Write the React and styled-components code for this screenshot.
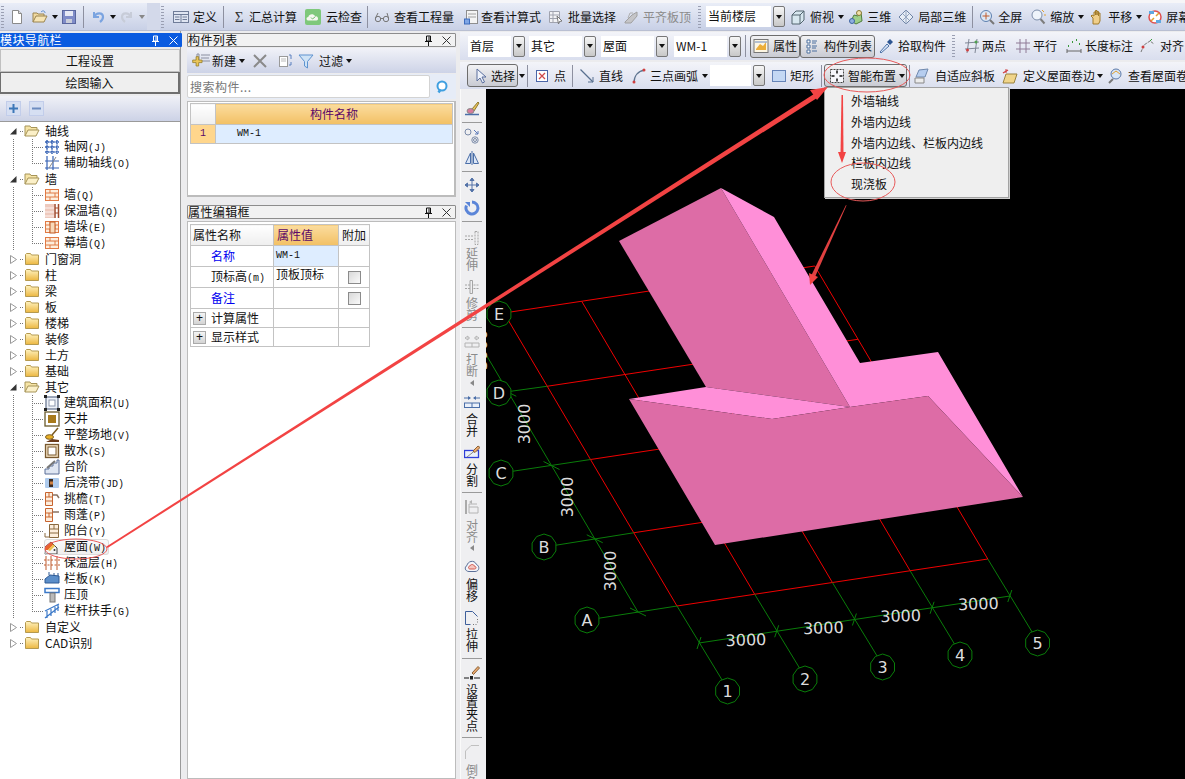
import React from "react";
import styled, { createGlobalStyle } from "styled-components";

const Global = createGlobalStyle`
  html, body { margin: 0; padding: 0; background: #ececee; }
  * { box-sizing: border-box; }
`;
const CJK = `"Noto Sans CJK SC", "Liberation Sans", sans-serif`;

const Page = styled.div`
  position: relative; width: 1185px; height: 779px; overflow: hidden;
  background: #ececee; font: 12px/1 ${CJK}; color: #111;
`;
const Bar = styled.div`
  display: flex; align-items: center; overflow: hidden; flex: none;
  height: ${p => p.$h}px; white-space: nowrap;
  background: linear-gradient(${p => p.$top}, ${p => p.$bottom});
`;
const TopBar = styled(Bar)`
  border-top: 3px solid #f6f6f8; border-bottom: 1px solid #b9bfd2;
`;
const Grip = styled.span`
  flex: none; width: 3px; height: 22px; margin-left: ${p => p.$ml}px;
  background: repeating-linear-gradient(to bottom, #9a9fb2 0 1px, transparent 1px 3px);
`;
const Sep = styled.span`
  flex: none; width: 1px; height: 22px; margin-left: ${p => p.$ml}px; background: #8d90a0;
`;
const GapBlock = styled.span`
  flex: none; width: 13px; height: 27px; margin-left: 1px; background: #d3d9ea;
`;
const Tool = styled.span`
  flex: none; display: flex; align-items: center; margin-left: ${p => p.$ml || 0}px;
  gap: ${p => p.$gap ?? 4}px; color: ${p => (p.$off ? "#8b8b8b" : "#111")};
`;
const Drop = styled.span`
  flex: none; width: 0; height: 0; margin: 0 1px 0 ${p => p.$ml || 0}px;
  border-left: 3px solid transparent; border-right: 3px solid transparent;
  border-top: 4px solid ${p => (p.$off ? "#888" : "#111")};
`;
const SigmaGlyph = styled.span`
  width: 16px; text-align: center; font: 15px/16px "Liberation Serif", serif; color: #333;
`;
const Select = styled.span`
  flex: none; display: flex; gap: 2px; height: 21px; width: ${p => p.$w}px;
  margin-left: ${p => p.$ml}px;
`;
const SelectText = styled.span`
  flex: 1; background: #fff; padding-left: 2px; line-height: 20px; font-size: 12px;
`;
const SelectBtn = styled.span`
  flex: none; width: 12px; display: flex; align-items: center; justify-content: center;
  border: 1px solid #777; border-radius: 2px; background: linear-gradient(#f6f6f6, #c8c8c8);
`;
const Toggle = styled.span`
  flex: none; display: flex; align-items: center; height: ${p => p.$h || 23}px;
  width: ${p => p.$w}px; margin-left: ${p => p.$ml || 0}px; padding-left: ${p => p.$pl}px;
  gap: ${p => p.$gap}px; border: 1px solid #6d6d6d; border-radius: 3px;
  background: linear-gradient(#f2f2f4, #c9cbd3);
`;
const Main = styled.div`display: flex; height: 748px;`;
const NavCol = styled.div`
  flex: none; width: 181px; padding-top: 2px; display: flex; flex-direction: column;
  border-right: 1px solid #9a9a9a;
`;
const ListCol = styled.div`
  flex: none; width: 269px; margin-left: 6px; padding-top: 2px;
  display: flex; flex-direction: column;
`;
const Title = styled.div`
  flex: none; height: 14px; display: flex; align-items: center;
  font-size: 12px; letter-spacing: .4px; line-height: 14px;
  margin-top: ${p => p.$mt || 0}px; margin-right: ${p => (p.$active ? -2 : 0)}px;
  color: ${p => (p.$active ? "#fff" : "#111")};
  background: ${p => (p.$active ? "#0a5be0" : "#f2f2f2")};
  border: ${p => (p.$active ? "0" : "1px solid #8d8d8d")};
  border-radius: 1px;
`;
const TitleText = styled.span`flex: 1;`;
const TitleBtn = styled.span`
  flex: none; width: 18px; display: flex; justify-content: center; align-items: center;
`;
const NavBtn = styled.div`
  flex: none; height: ${p => p.$h}px; margin-top: ${p => p.$mt}px; text-align: center;
  line-height: ${p => p.$h - 2}px; font-size: 12px; background: #efefef;
  border: 1px solid ${p => (p.$on ? "#6f6f6f" : "#c0c0c0")};
  border-width: ${p => (p.$on ? "1px 2px 2px 1px" : "1px")};
`;
const TreeTools = styled.div`
  flex: none; height: 25px; margin-top: 2px; display: flex; align-items: center;
  gap: 8px; padding-left: 6px; background: linear-gradient(#f0f1f7, #ccd2e6);
`;
const SquareBtn = styled.span`
  width: 15px; height: 15px; background: #d6dff2; border: 1px solid #c2cdea;
  display: flex; align-items: center; justify-content: center;
`;
const Tree = styled.div`
  flex: 1; background: #fff; padding-top: 1px; border-top: 1px solid #9a9a9a; overflow: hidden;
`;
const HiddenDefs = styled.svg`position: absolute; width: 0; height: 0;`;
const Row = styled.div`display: flex; align-items: center; height: 16px; font-size: 12px;`;
const Expander = styled.span`
  flex: none; width: 20px; height: 16px; display: flex; justify-content: flex-end;
  align-items: center; padding-right: 3px;
`;
const FolderDots = styled.span`
  flex: none; width: 4px; height: 1px;
  background: repeating-linear-gradient(to right, #777 0 1px, transparent 1px 2px);
`;
const TreeGuide = styled.span`
  flex: none; width: 14px; height: 16px; margin-right: 18px;
  background: repeating-linear-gradient(to bottom, #777 0 1px, transparent 1px 2px) 13px 0 / 1px 100% no-repeat;
`;
const Branch = styled.span`
  flex: none; width: 12px; height: 16px; background-repeat: no-repeat;
  background-image:
    repeating-linear-gradient(to bottom, #777 0 1px, transparent 1px 2px),
    repeating-linear-gradient(to right, #777 0 1px, transparent 1px 2px);
  background-size: 1px ${p => (p.$last ? "8px" : "100%")}, 100% 1px;
  background-position: 0 0, 0 8px;
`;
const ChildLabel = styled.span`
  display: flex; align-items: center; gap: 4px; height: 16px; padding-right: 3px;
  ${p => p.$sel && `outline: 1px solid #dcdcdc; outline-offset: -1px; border-radius: 3px;
    background: linear-gradient(#fbfbfb, #eeeeee);`}
`;
const FolderLabel = styled.span`margin-left: 5px;`;
const Mono = styled.span`font: 10px/12px "Liberation Mono", monospace;`;
const PanelBar = styled.div`
  flex: none; height: 25px; margin-top: 1px; display: flex; align-items: center;
  padding-left: 4px; background: linear-gradient(#f1f2f8, #cdd3e7);
`;
const Search = styled.div`
  flex: none; display: flex; align-items: center; height: 25px; margin-top: 1px;
  background: #e6ecf7;
`;
const SearchInput = styled.div`
  width: 243px; height: 23px; background: #fff; border: 1px solid #d3d3d3; border-radius: 2px;
  color: #777; font-size: 12px; line-height: 21px; padding-left: 2px; letter-spacing: .5px;
`;
const SearchIcon = styled.span`flex: 1; display: flex; justify-content: center;`;
const ListBox = styled.div`
  flex: none; height: 96px; margin-top: 2px; padding: 1px 2px;
  background: #fff; border: 1px solid #bcbcbc; border-width: 1px 2px 2px 1px;
`;
const Grid = styled.table`
  border-collapse: collapse; table-layout: fixed; font-size: 12px;
  width: ${p => p.$w}px;
  td, th { border: 1px solid #c3c3c3; padding: 0; font-weight: 400; }
`;
const HeadCell = styled.th`
  height: 21px; color: #5c0a68; text-align: ${p => p.$left ? "left" : "center"};
  background: linear-gradient(#fbdc9e, #f2c064);
  ${p => p.$w && `width: ${p.$w}px;`}
  ${p => p.$left && "padding-left: 3px !important;"}
`;
const PlainHead = styled.th`
  height: 21px; width: ${p => p.$w}px; text-align: ${p => p.$left ? "left" : "center"};
  background: linear-gradient(#ffffff, #eeeeee);
  padding-left: ${p => p.$left ? 2 : 0}px !important;
`;
const NumCell = styled.td`
  height: 19px; width: 25px; text-align: center; background: #ffd68c; color: #5c0a68;
  font: 10px/12px "Liberation Mono", monospace;
`;
const WmCell = styled.td`
  background: #deedff; font: 10px/12px "Liberation Mono", monospace;
  padding-left: ${p => p.$pl}px !important;
`;
const AttrBox = styled.div`
  flex: 1; margin-top: 2px; padding: 2px; background: #fff; border: 1px solid #bcbcbc;
`;
const AttrName = styled.td`
  height: 21px; padding-left: 20px !important; color: ${p => (p.$blue ? "#0000f0" : "#111")};
`;
const AttrValue = styled.td`vertical-align: top; padding: 1px 0 0 2px !important;`;
const AttrGroup = styled.td`height: 19px;`;
const AttrGroupIn = styled.span`display: flex; align-items: center; gap: 5px; padding-left: 2px;`;
const PlusBox = styled.span`
  width: 13px; height: 13px; border: 1px solid #aaa; background: linear-gradient(#f4f4f4, #d4d4d4);
  font: 12px/11px "Liberation Sans", sans-serif; text-align: center;
`;
const CheckCell = styled.td`text-align: center; vertical-align: middle;`;
const Check = styled.span`
  display: inline-block; width: 13px; height: 13px; vertical-align: middle;
  border: 1px solid #8b8b8b; background: linear-gradient(135deg, #d9d9d9, #fafafa);
`;
const Work = styled.div`
  flex: none; width: 725px; margin-left: 4px; padding-top: 1px; display: flex; flex-direction: column;
`;
const Row2 = styled(Bar)`margin-bottom: 2px;`;
const Body = styled.div`display: flex; flex: 1; min-height: 0; margin-top: 0;`;
const VBar = styled.div`
  flex: none; width: 26px; height: 690px; overflow: hidden; background: #efeff1;
  display: flex; flex-direction: column; align-items: center;
  border-left: 1px solid #fafafa; padding-right: 3px;
`;
const VSep = styled.span`
  flex: none; width: 20px; height: 1px; background: #9a9a9a; margin-top: ${p => p.$mt}px;
`;
const VIcon = styled.span`flex: none; display: block; height: 16px; margin-top: ${p => p.$mt}px;`;
const VText = styled.span`
  flex: none; width: 12px; line-height: 12px; font-size: 12px; word-break: break-all;
  margin-top: ${p => p.$mt}px; color: ${p => (p.$off ? "#8b8b8b" : "#111")};
`;
const VDrop = styled.span`
  flex: none; width: 0; height: 0; margin-top: ${p => p.$mt}px; margin-right: 0;
  border-top: 3px solid transparent; border-bottom: 3px solid transparent;
  border-right: 4px solid #888;
`;
const CanvasSvg = styled.svg`flex: none; display: block; background: #000;`;
const Menu = styled.div`
  position: absolute; left: 824px; top: 87px; width: 185px; height: 111px; padding-top: 3px;
  background: #efefef; border: 1px solid #a2a2a2; box-shadow: 1px 1px 0 #cfcfcf;
`;
const MenuItem = styled.div`
  height: 20.75px; line-height: 20px; padding-left: 26px; font-size: 12px; color: #111;
`;
const Overlay = styled.svg`
  position: absolute; left: 0; top: 0; pointer-events: none;
`;
const IconSvg = styled.svg`display: block; flex: none;`;

const I = ({ children, w = 16, h = 16 }) => (
  <IconSvg width={w} height={h} viewBox={`0 0 ${w} ${h}`} fill="none">{children}</IconSvg>
);

const brick = (
  <>
    <rect x="1.500" y="2.500" width="13" height="11" fill="#fdeedd" stroke="#e07a45" />
    <path d="M1.500 6h13M1.500 10h13M6 2.500V6M11 6v4M6 10v3.500" stroke="#e07a45" />
  </>
);
const icons = {
  doc: <I><path d="M3.500 1.500h6l3 3v10h-9z" fill="#fff" stroke="#8a8a8a" /><path d="M9.500 1.500v3h3" fill="#ddd" stroke="#8a8a8a" /></I>,
  open: <I><path d="M1 13V4h4l1 1h6v2" fill="#f0d9a0" stroke="#9a8450" /><path d="M1 13l3-6h11l-3 6z" fill="#f6e4b4" stroke="#9a8450" /><path d="M9 3c2-2 4-1 4 1" stroke="#5b8ac9" /></I>,
  save: <I><rect x="1.500" y="1.500" width="13" height="13" fill="#7f8cc8" stroke="#5a679e" /><rect x="4" y="2" width="8" height="5" fill="#e6e9f5" /><rect x="5" y="10" width="6" height="4" fill="#c9cdd9" /></I>,
  undo: <I><path d="M4 3v5h5" stroke="#7ba4e0" strokeWidth="2" /><path d="M4.500 7.500C6 3.500 13 3 13 8c0 2-1 3.500-3 5" stroke="#7ba4e0" strokeWidth="2.200" /></I>,
  redo: <I><path d="M12 3v5H7" stroke="#c7ccd8" strokeWidth="2" /><path d="M11.500 7.500C10 3.500 3 3 3 8c0 2 1 3.500 3 5" stroke="#c7ccd8" strokeWidth="2.200" /></I>,
  define: <I><rect x=".5" y="2.500" width="15" height="11" fill="#dfe5f2" stroke="#6f7c98" /><path d="M.5 5.500h15M8 5.500v8M9.500 8h4.500M9.500 10.500h4.500M2 8h4.500M2 10.500h4.500" stroke="#6f7c98" /></I>,
  cloud: <I><rect width="16" height="16" rx="2" fill="#7ec87b" /><path d="M3 11.500c-2-.3-2-3.300.3-3.500C4 4.800 8.500 4.500 10 7c3-.5 4.300 4 1.500 4.500z" fill="#f4f7f0" /><path d="M6 8.500l1.500 1.500L10.500 7.500" stroke="#6dbb6b" /></I>,
  glasses: <I><circle cx="4" cy="10" r="2.700" stroke="#777" /><circle cx="12" cy="10" r="2.700" stroke="#777" /><path d="M1.500 9L4 4M14.500 9L13 4M6.700 9.500h2.600" stroke="#777" /></I>,
  calc: <I><rect x="2.500" y="1.500" width="11" height="13" fill="#f4f4f4" stroke="#8e8e8e" /><path d="M4 5h8M4 8h8" stroke="#a0a0a0" /><rect x=".5" y="10" width="5" height="5" fill="#7fa6e6" stroke="#3e6cbc" /></I>,
  batch: <I><path d="M1.500 2.500h10v11h-10zM1.500 6h10M1.500 9.500h10M5 2.500v11" stroke="#a0a3ae" fill="#f2f2f5" /><path d="M9 7l5 5-2.500.5L10.500 15z" fill="#fff" stroke="#777" /></I>,
  flush: <I><path d="M2 13l7-7 5-3v4l-6 7H2z" fill="#c5c5c8" stroke="#a0a0a0" /><path d="M5 9l2-5h3" stroke="#b0b0b0" /></I>,
  cube: <I><path d="M2 6l4-4h8v9l-4 4H2z" fill="#d7e7ef" stroke="#52646f" /><path d="M2 6h8v9M10 6l4-4" stroke="#52646f" /></I>,
  three: <I><path d="M3 12l3-6 4 1 3-4 1 9-6 3z" fill="#9fcf88" stroke="#4e7d3c" /><circle cx="11" cy="4" r="2.500" fill="#f1e1a8" stroke="#8a7a38" /><circle cx="4" cy="12" r="2.500" fill="#8fb0e0" stroke="#3d63a0" /></I>,
  partial: <I><path d="M8 1l7 7-7 7-7-7z" fill="#e7edf5" stroke="#6e84a5" /><path d="M4.500 4.500l7 7M11.500 4.500l-7 7M8 1v14" stroke="#93a4bf" /></I>,
  full: <I><circle cx="7" cy="7" r="5.500" fill="#dbe8f7" stroke="#5d7fae" /><path d="M7 3.500v7M3.500 7h7" stroke="#c05a2a" /><path d="M11 11l4 4" stroke="#777" strokeWidth="2" /></I>,
  zoom: <I><circle cx="7" cy="6" r="5" fill="#eef4fb" stroke="#7d8fab" /><path d="M10.500 10l4 4.500" stroke="#7d7d7d" strokeWidth="2" /><path d="M12 1l2 2M14 6h2" stroke="#e0a030" /></I>,
  pan: <I><path d="M4 15V9L2 7l1-1 2 1V3h1.500v3V1.500H8V6 2.500h1.500V7 4H11v8l-1.500 3z" fill="#f0cf8a" stroke="#a17b2b" /></I>,
  screen: <I><circle cx="8" cy="8" r="6" fill="#fff" stroke="#e05050" strokeWidth="1.500" /><path d="M2 2h5v3H2zM9 11h5v3H9z" fill="#5fa8e0" /><path d="M4 12l3-3M9 7l3-3" stroke="#e0a030" strokeWidth="1.500" /></I>,
  attr: <I><rect x="1" y="1.500" width="14" height="13" fill="#fdf6e3" stroke="#777" /><path d="M3 11l4-5 3 2 3-4v8H3z" fill="#ecae3a" /><path d="M2 4h12" stroke="#6a8ac0" /></I>,
  list: <I w={12}><path d="M1 2h3v3H1zM1 7h3v3H1zM1 12h3v3H1z" fill="#fff" stroke="#4b6f9e" /><path d="M6 3h5M6 5h4M6 8h5M6 10h4M6 13h5" stroke="#4b6f9e" /></I>,
  pick: <I><path d="M2 14l7-8 2 2-8 7z" fill="#d7e5f7" stroke="#5073a8" /><path d="M9 4l3-3 3 3-3 3z" fill="#2e5692" /></I>,
  twoPts: <I><path d="M5 1l-2 14M13 1l-2 14M1 5l14-1M1 11l14-1" stroke="#7f8696" /><circle cx="3.500" cy="12" r="1.500" fill="#d04040" /><circle cx="12" cy="4" r="1.500" fill="#50a050" /></I>,
  parallel: <I><path d="M5 1v14M11 1v14M1 5h14M1 11h14" stroke="#8f7b96" /></I>,
  dimLen: <I><path d="M1 11v4M15 11v4M1 13h14" stroke="#666" /><path d="M2 8h1M6 4h1M10 2h1M13 6h1" stroke="#3a9a3a" strokeWidth="2" /></I>,
  alignT: <I><path d="M1 14l3-7 6-4 4 3" stroke="#777" strokeDasharray="3 1" /><circle cx="3" cy="9" r="1.500" fill="#d04040" /><path d="M10 3l2-2" stroke="#3a9a3a" /></I>,
  cursor: <I><path d="M4 1v12l3-3 2.500 5 2-1L9 9h4z" fill="#eef2fb" stroke="#5a6f9e" /></I>,
  point: <I><rect x="2.500" y="2.500" width="11" height="11" fill="#fff" stroke="#4a65a8" /><path d="M5 5l6 6M11 5l-6 6" stroke="#d04a4a" strokeWidth="1.300" /></I>,
  line: <I><path d="M1.500 1.500L14 14" stroke="#58708f" strokeWidth="1.300" /><path d="M9 14h5V9" stroke="#58708f" /></I>,
  arc: <I><path d="M3 15C3 8 7 3 14 2" stroke="#5e7590" strokeWidth="1.300" /><circle cx="3" cy="14" r="1.500" fill="#d04040" /><circle cx="13" cy="2" r="1.500" fill="#d04040" /></I>,
  rect: <I><rect x="1.500" y="2.500" width="13" height="11" fill="#c4d8f4" stroke="#6684b8" /></I>,
  smart: <I><rect x="1.500" y="1.500" width="13" height="13" fill="#f6f6fb" stroke="#444" strokeDasharray="2 1" /><path d="M8 2.500v3M8 10.500v3M2.500 8h3M10.500 8h3" stroke="#111" strokeWidth="1.500" /></I>,
  adapt: <I><path d="M5 2l9-1-3 8H2z" fill="#b6cdef" stroke="#6f88ad" /><path d="M1 10h9v5H1z" fill="#ececec" stroke="#888" /></I>,
  curb: <I><path d="M4 6h11l-3 9H1z" fill="#f0d58a" stroke="#9a8240" /><path d="M1 5l5-3" stroke="#d04040" strokeWidth="1.400" /><path d="M4 1v4" stroke="#d04040" /></I>,
  viewCurb: <I><circle cx="8" cy="6" r="5" fill="#d9e7f7" stroke="#5a78a8" /><path d="M4 6l4-3 4 3" stroke="#e0a030" /><path d="M5 11l-4 4" stroke="#777" strokeWidth="2" /></I>,
  brush: <I><path d="M8 9l6-7 1 1-5 8z" fill="#e8c25a" stroke="#8f7a30" /><ellipse cx="6.500" cy="11" rx="3.500" ry="2.500" fill="#d87a9a" stroke="#888" /><path d="M1 14.500h14" stroke="#4a6ea8" strokeWidth="1.500" /></I>,
  copyO: <I><circle cx="4" cy="4" r="3" stroke="#7a8aa8" /><circle cx="11" cy="12" r="3.200" stroke="#7a8aa8" /><circle cx="11" cy="12" r="1.500" stroke="#7a8aa8" /><path d="M10 2l4 4M14 3v3h-3" stroke="#5a78b8" /></I>,
  mirror: <I><path d="M8 1v14" stroke="#4a6ea8" /><path d="M6.500 3v10.500H1.500zM9.500 3v10.500h5z" fill="#dbe6f6" stroke="#4a6ea8" /></I>,
  move: <I><path d="M8 1v14M1 8h14M8 1L6 3.500h4zM8 15l-2-2.500h4zM1 8l2.500-2v4zM15 8l-2.500-2v4z" stroke="#5473a8" fill="#5473a8" /></I>,
  rotate: <I><path d="M8 2a6 6 0 1 1-5.500 3.500" stroke="#5b85d8" strokeWidth="3" /><path d="M1 2h5v5z" fill="#5b85d8" /></I>,
  extend: <I><path d="M11 1.500h3v13h-3zM1 6h9M1 9.500h9" stroke="#a4a4a4" strokeDasharray="2 1" /></I>,
  trim: <I><path d="M6 1.500h2.500v13H6z" stroke="#a4a4a4" /><path d="M1 6h5M1 9.500h5M9.500 6H15M9.500 9.500H15" stroke="#a4a4a4" strokeDasharray="2 1" /></I>,
  breakT: <I><path d="M1 4l3-2v4zM15 4l-3-2v4zM4 4h2M10 4h2M1 9h14v4H1zM8 9v4" stroke="#b3b3b3" /></I>,
  merge: <I><path d="M0 5h6M16 5h-6" stroke="#4a6ea8" /><path d="M7 5L4 3v4zM9 5l3-2v4z" fill="#4a6ea8" /><rect x=".5" y="10" width="15" height="4.500" fill="#eaf0fa" stroke="#4a6ea8" /><path d="M8 10v4" stroke="#4a6ea8" /></I>,
  split: <I><rect x=".5" y="6.500" width="14" height="7" fill="#eaf0fa" stroke="#2f3fd8" strokeWidth="1.300" /><path d="M3 13l10-8" stroke="#888" /><path d="M9 7l5-5 2 1.500-5 5z" fill="#eca970" stroke="#8a6236" /></I>,
  alignV: <I><path d="M2 1v14" stroke="#aaa" strokeWidth="2" /><path d="M5 8V5h8M5 8h9v6H5z" stroke="#b4b4b4" /><path d="M5 3l3-2v4z" fill="#b4b4b4" /></I>,
  offset: <I><path d="M5 12.500C1 12.500 0 8 3 6.500 3.500 2.500 10 0 12.500 5.500 16 7 15.500 12.500 11 12.500z" fill="#f4f5fa" stroke="#5a6f98" /><path d="M6 10c-2 0-2-3 0-3 .5-2 4-2 4.500.3 2 0 2 2.700 0 2.700z" fill="#f5c6c0" stroke="#d05a50" /></I>,
  stretch: <I><path d="M1.500 14.500v-13h7l5 5" stroke="#3e5f9a" /><path d="M1.500 14.500h5" stroke="#3e5f9a" /><path d="M9 14.500h5M13.500 9v4" stroke="#777" strokeDasharray="1 1.500" /></I>,
  gripI: <I><path d="M0 13h5M10 13h6" stroke="#111" /><rect x="6" y="11" width="3" height="3.500" fill="#222" /><path d="M8 8l6-6.500 1.500 1.500L9.500 9.500z" fill="#eca970" stroke="#8a6236" /></I>,
  chamfer: <I><path d="M1.500 15V7L7 1.500h8" stroke="#c0c0c0" /></I>,
  folderO: <I><path d="M1 13V3h5l1 1.500h6V7" fill="#f6e4a6" stroke="#a69458" /><path d="M1 13l3-6h11l-3 6z" fill="#fbf0c8" stroke="#a69458" /></I>,
  folder: <I><path d="M1.500 13.500v-10l1-1h4l1 1.500h7v9.500z" fill="url(#fg)" stroke="#b59a50" /></I>,
  grid: <I><path d="M3 1v14M8 1v14M13 1v14M1 3h14M1 8h14M1 13h14" stroke="#3561b4" strokeWidth="1.500" strokeDasharray="2 .6" /></I>,
  aux: <I><path d="M3 1v14M9 1v14M1 13h14M1 6h14" stroke="#3561b4" strokeWidth="1.200" /><path d="M5 13L12 2" stroke="#888" /></I>,
  brick: <I>{brick}</I>,
  insul: <I><rect x="1" y="1" width="9" height="14" fill="#eec9bd" /><path d="M1 5h9M1 9h9M1 13h9" stroke="#f7e4de" strokeWidth="1.500" /><path d="M11 1v14M14.500 1v14" stroke="#a14a2c" strokeWidth="1.500" /><path d="M11 5h3M11 10h3" stroke="#a14a2c" /></I>,
  pier: <I>{brick}<rect x="6" y="3" width="5" height="11" fill="#f8d9b8" stroke="#c05a25" /></I>,
  area: <I><rect x="2" y="2" width="12" height="12" fill="#eef2f8" stroke="#6d7a94" strokeWidth="1.300" /><rect x="5" y="5" width="6" height="6" fill="#fff" stroke="#8d97ad" /><path d="M0 0h3v3H0zM13 0h3v3h-3zM0 13h3v3H0zM13 13h3v3h-3z" fill="#222" /></I>,
  well: <I><rect x="1" y="1" width="14" height="14" fill="#fff" stroke="#6a5a2a" strokeWidth="1.300" /><rect x="4" y="4" width="8" height="8" fill="#a87a1c" /></I>,
  level: <I><path d="M8 8l6-7" stroke="#7a5a20" strokeWidth="1.500" /><ellipse cx="5.500" cy="10" rx="4" ry="2.300" fill="#e8b028" stroke="#7a5a20" /><path d="M2 15l6-3 7 1v2z" fill="#6a3a1a" /></I>,
  apron: <I><rect x="1.500" y="1.500" width="13" height="13" fill="#f2e0c0" stroke="#7a5a30" strokeWidth="1.300" /><rect x="4" y="4" width="8" height="8" fill="#fff" stroke="#7a5a30" /></I>,
  step: <I><path d="M1 15V10h4V7h4V4h4V1h2v14z" fill="#dfe6f2" stroke="#5a6f98" /><path d="M3 9l8-7" stroke="#777" strokeWidth="2" /></I>,
  post: <I><rect x="1" y="3" width="14" height="10" rx="1" fill="#aecbed" /><path d="M5 4h4v8H5z" fill="#3a2a20" /><path d="M6 8h3" stroke="#d08040" strokeWidth="3" /></I>,
  eave: <I><path d="M1.500 1.500h7v13h-7zM1.500 6h7M1.500 10h7M5 1.500V6" stroke="#c8642f" fill="#fdeedd" /><path d="M8.500 4H13l2 3" stroke="#8a7260" strokeWidth="1.500" /></I>,
  canopy: <I><path d="M1.500 1.500h7v13h-7zM1.500 6h7M1.500 10h7M5 6v4" stroke="#c8642f" fill="#fdeedd" /><path d="M8.500 5H15" stroke="#8a7260" strokeWidth="1.500" /></I>,
  balcony: <I><path d="M5.500 1.500h9v13h-9zM5.500 6h9M5.500 10h9M10 1.500V6" stroke="#8a6a40" fill="#fdeedd" /><path d="M1 10v4h5" stroke="#8a6a40" /></I>,
  roof: <I><path d="M1 15V8l6-5 6 6v6z" fill="#f5f5f5" stroke="#444" /><path d="M1 8l6-5 2.500 2.500L4 11H1z" fill="#e8662a" /><path d="M4 11l5.500-5.500L11 7l-5 5z" fill="#eec24a" /><circle cx="10.500" cy="11" r="1" fill="#333" /></I>,
  insLayer: <I><path d="M2 1v14M7 1v14M13 1v14" stroke="#bf5a2c" /><path d="M0 5h16M0 10h16" stroke="#bf5a2c" strokeDasharray="2 1.500" /></I>,
  parapet: <I><path d="M1 8l5-4 9 1v7H1z" fill="#5b8ec9" stroke="#2f5a94" /><path d="M5 4V1M10 5V2M14 5V2" stroke="#2f5a94" /></I>,
  coping: <I><rect x="1" y="1.500" width="14" height="4" fill="#fff" stroke="#3a78c8" strokeWidth="1.500" /><rect x="6" y="6" width="5" height="9" fill="#b9b9b9" stroke="#777" /></I>,
  rail: <I><path d="M1 15l14-11M1 8l14-7M3 8v7M7 6v7M11 4v6M14 2v6" stroke="#3a78c8" strokeWidth="1.200" /></I>,
  magnify: <I><circle cx="7" cy="7" r="4.500" fill="#fff" stroke="#3f9fe0" strokeWidth="2" /><path d="M3.500 13.500l2-3" stroke="#3f9fe0" strokeWidth="2.500" /></I>,
  addNew: <I w={20}><path d="M6 1h2v7H6zM10 2h9M10 5h8M10 8h9" stroke="#8a8fa0" /><path d="M2 13h4v-4h3v4h4v3H9v4H6v-4H2z" transform="translate(0 -4) scale(.85)" fill="#ecc658" stroke="#9a8230" /></I>,
  del: <I><path d="M2 2l12 12M14 2L2 14" stroke="#8a8a8a" strokeWidth="2" /></I>,
  copyDoc: <I><rect x="2.500" y="3.500" width="8" height="10" fill="#fff" stroke="#9a9a9a" /><path d="M4 6h5M4 8h5" stroke="#bbb" /><path d="M12 2h2v4M14 9v3h-2" stroke="#5a80c0" /></I>,
  filter: <I><path d="M1 2h14L9.500 8.500V15L6.500 13V8.500z" fill="#cfe3f6" stroke="#5e93cf" /></I>,
};

const PinBtn = ({ c }) => (
  <TitleBtn>
    <I w={9} h={11}>
      <path d="M2.500 1h4v5h-4zM1 6.500h7M4.500 7v4" stroke={c} />
      <path d="M5 1.500v4" stroke={c} />
    </I>
  </TitleBtn>
);
const CloseBtn = ({ c }) => (
  <TitleBtn>
    <I w={9} h={9}><path d="M.5.5l8 8M8.500.5l-8 8" stroke={c} /></I>
  </TitleBtn>
);

const Arrow = () => <Drop />;

const render = (x, i) => {
  if (x.t === "grip") return <Grip key={i} $ml={x.ml} />;
  if (x.t === "sep") return <Sep key={i} $ml={x.ml} />;
  if (x.t === "drop") return <Drop key={i} $ml={x.ml} $off={x.off} />;
  if (x.t === "gap") return <GapBlock key={i} />;
  if (x.t === "select")
    return (
      <Select key={i} $w={x.w} $ml={x.ml}>
        <SelectText>{x.text}</SelectText>
        <SelectBtn><Arrow /></SelectBtn>
      </Select>
    );
  if (x.t === "toggle")
    return (
      <Toggle key={i} $w={x.w} $ml={x.ml} $pl={x.pl} $gap={x.gap}>
        {icons[x.i]}
        {x.text}
        {x.drop && <Arrow />}
      </Toggle>
    );
  if (x.t === "sigma")
    return (
      <Tool key={i} $ml={x.ml} $gap={x.gap}><SigmaGlyph>Σ</SigmaGlyph>{x.text}</Tool>
    );
  return (
    <Tool key={i} $ml={x.ml} $gap={x.gap} $off={x.off}>
      {icons[x.i]}
      {x.text}
    </Tool>
  );
};

const row1 = [
  { t: "grip", ml: 1 }, { i: "doc", ml: 5 }, { i: "open", ml: 7 }, { t: "drop", ml: 4 }, { i: "save", ml: 2 },
  { t: "sep", ml: 6 }, { i: "undo", ml: 6 }, { t: "drop", ml: 4 }, { i: "redo", ml: 2 }, { t: "drop", ml: 4, off: 1 },
  { t: "gap" }, { t: "grip", ml: 1 },
  { i: "define", ml: 9, text: "定义" }, { t: "sep", ml: 6 },
  { t: "sigma", ml: 7, gap: 2, text: "汇总计算" }, { i: "cloud", ml: 8, gap: 5, text: "云检查" }, { t: "sep", ml: 5 },
  { i: "glasses", ml: 6, text: "查看工程量" }, { i: "calc", ml: 10, gap: 1, text: "查看计算式" },
  { i: "batch", ml: 7, text: "批量选择" }, { i: "flush", ml: 7, off: 1, text: "平齐板顶" },
  { t: "grip", ml: 7 }, { t: "select", w: 79, ml: 5, text: "当前楼层" },
  { i: "cube", ml: 5, text: "俯视" }, { t: "drop", ml: 4 }, { i: "three", ml: 3, gap: 3, text: "三维" },
  { i: "partial", ml: 7, text: "局部三维" }, { t: "sep", ml: 6 },
  { i: "full", ml: 6, gap: 3, text: "全屏" }, { i: "zoom", ml: 8, text: "缩放" }, { t: "drop", ml: 4 },
  { i: "pan", ml: 4, gap: 3, text: "平移" }, { t: "drop", ml: 4 }, { i: "screen", ml: 4, gap: 3, text: "屏幕" },
];
const row2 = [
  { t: "select", w: 57, ml: 8, text: "首层" }, { t: "select", w: 67, ml: 4, text: "其它" },
  { t: "select", w: 67, ml: 5, text: "屋面" }, { t: "select", w: 67, ml: 6, text: "WM-1" },
  { t: "sep", ml: 4 },
  { t: "toggle", i: "attr", w: 50, ml: 4, pl: 2, gap: 4, text: "属性" },
  { t: "toggle", i: "list", w: 75, pl: 5, gap: 6, text: "构件列表" },
  { i: "pick", ml: 3, text: "拾取构件" }, { t: "grip", ml: 6 },
  { i: "twoPts", ml: 9, gap: 2, text: "两点" }, { i: "parallel", ml: 9, gap: 2, text: "平行" },
  { i: "dimLen", ml: 9, gap: 3, text: "长度标注" }, { i: "alignT", ml: 7, text: "对齐" },
];
const row3 = [
  { t: "toggle", i: "cursor", w: 51, ml: 7, pl: 5, gap: 2, text: "选择" }, { t: "drop", ml: 1 },
  { t: "sep", ml: 1 }, { i: "point", ml: 6, text: "点" }, { t: "sep", ml: 6 },
  { i: "line", ml: 6, text: "直线" }, { i: "arc", ml: 8, gap: 3, text: "三点画弧" }, { t: "drop", ml: 4 },
  { t: "select", w: 55, ml: 1 },
  { i: "rect", ml: 6, gap: 3, text: "矩形" }, { t: "sep", ml: 7 },
  { t: "toggle", i: "smart", w: 83, ml: 2, pl: 4, gap: 3, text: "智能布置", drop: 1 },
  { t: "sep", ml: 2 }, { i: "adapt", ml: 4, gap: 5, text: "自适应斜板" },
  { i: "curb", ml: 7, gap: 5, text: "定义屋面卷边" }, { t: "drop", ml: 2 },
  { i: "viewCurb", ml: 4, text: "查看屋面卷边" },
];

const tree = [
  { f: "轴线", open: 1, kids: [["grid", "轴网", "(J)"], ["aux", "辅助轴线", "(O)"]] },
  { f: "墙", open: 1, kids: [["brick", "墙", "(Q)"], ["insul", "保温墙", "(Q)"], ["pier", "墙垛", "(E)"], ["brick", "幕墙", "(Q)"]] },
  { f: "门窗洞" }, { f: "柱" }, { f: "梁" }, { f: "板" }, { f: "楼梯" }, { f: "装修" }, { f: "土方" }, { f: "基础" },
  {
    f: "其它", open: 1,
    kids: [
      ["area", "建筑面积", "(U)"], ["well", "天井", ""], ["level", "平整场地", "(V)"], ["apron", "散水", "(S)"],
      ["step", "台阶", ""], ["post", "后浇带", "(JD)"], ["eave", "挑檐", "(T)"], ["canopy", "雨蓬", "(P)"],
      ["balcony", "阳台", "(Y)"], ["roof", "屋面", "(W)", 1], ["insLayer", "保温层", "(H)"], ["parapet", "栏板", "(K)"],
      ["coping", "压顶", ""], ["rail", "栏杆扶手", "(G)"],
    ],
  },
  { f: "自定义" }, { f: "CAD识别" },
];

const ExpandIcon = ({ open }) =>
  open ? (
    <I w={7} h={7}><path d="M0 6.500L6.500 0v6.500z" fill="#333" /></I>
  ) : (
    <I w={7} h={9}><path d="M.5.5l6 4-6 4z" fill="#fff" stroke="#999" /></I>
  );

const FolderRow = ({ node }) => (
  <Row>
    <Expander><ExpandIcon open={node.open} /></Expander>
    <FolderDots />
    {node.open ? icons.folderO : icons.folder}
    <FolderLabel>{node.f}</FolderLabel>
  </Row>
);

const NavTree = () => (
  <Tree>
    <HiddenDefs>
      <defs>
        <linearGradient id="fg" x1="0" y1="0" x2="0" y2="1">
          <stop offset="0" stopColor="#fff3c0" />
          <stop offset="1" stopColor="#ecb740" />
        </linearGradient>
      </defs>
    </HiddenDefs>
    {tree.map(n => (
      <React.Fragment key={n.f}>
        <FolderRow node={n} />
        {n.kids && n.kids.map(([ic, label, code, sel], i) => (
          <Row key={label + i}>
            <TreeGuide />
            <Branch $last={i === n.kids.length - 1} />
            <ChildLabel $sel={sel}>
              {icons[ic]}
              <span>{label}<Mono>{code}</Mono></span>
            </ChildLabel>
          </Row>
        ))}
      </React.Fragment>
    ))}
  </Tree>
);

const vitems = [
  ["i", "brush", 11], ["s", 6], ["i", "copyO", 5], ["i", "mirror", 6], ["s", 5], ["i", "move", 5], ["i", "rotate", 7], ["s", 5],
  ["i", "extend", 8], ["t", "延伸", 1, 1], ["i", "trim", 8], ["t", "修剪", 2, 1], ["s", 6],
  ["i", "breakT", 6], ["t", "打断", 3, 1], ["d", 3], ["i", "merge", 7], ["t", "合并", 4], ["i", "split", 7], ["t", "分割", 3], ["s", 5],
  ["i", "alignV", 6], ["t", "对齐", 4, 1], ["d", 2], ["i", "offset", 8], ["t", "偏移", 3], ["i", "stretch", 8], ["t", "拉伸", 2], ["s", 6],
  ["i", "gripI", 6], ["t", "设置夹点", 3], ["s", 5], ["i", "chamfer", 6], ["t", "倒角", 4, 1],
];

const VToolbar = () => (
  <VBar>
    {vitems.map((v, k) => {
      if (v[0] === "s") return <VSep key={k} $mt={v[1]} />;
      if (v[0] === "d") return <VDrop key={k} $mt={v[1]} />;
      if (v[0] === "t") return <VText key={k} $mt={v[2]} $off={v[3]}>{v[1]}</VText>;
      return <VIcon key={k} $mt={v[2]}>{icons[v[1]]}</VIcon>;
    })}
  </VBar>
);

/* 3D drawing of the roof and axis grid */
const P = (i, j) => [677 + 77.7 * i - 43.25 * j, 606 - 11.75 * i - 73.25 * j];
const RED = "#f00000";
const GREEN = "#0a7d0a";
const bubble = (cx, cy) =>
  Array.from({ length: 10 }, (_, k) => {
    const a = (Math.PI * 2 * k) / 10 + Math.PI / 10;
    return `${(cx + 12.5 * Math.cos(a)).toFixed(1)},${(cy + 13 * Math.sin(a)).toFixed(1)}`;
  }).join(" ");
const L = ({ a, b, c }) => <line x1={a[0]} y1={a[1]} x2={b[0]} y2={b[1]} stroke={c} strokeWidth="1" />;
const rowB = [["E", 499, 314], ["D", 499, 393], ["C", 501, 473], ["B", 544, 547], ["A", 587, 620]];
const colB = [["1", 727.6, 691], ["2", 805, 679], ["3", 882.6, 667], ["4", 960, 655], ["5", 1037.6, 643]];
const dimH = [[746, 641], [823.4, 629], [900.7, 617], [978.4, 605]];
const dimV = [[611.8, 571], [568.5, 497], [525, 424], [482, 350]];
const labelStyle = { fontFamily: '"DejaVu Sans", sans-serif', fontSize: 16, fill: "#dcdcdc" };

const Drawing = () => (
  <CanvasSvg width="699" height="690" viewBox="486 89 699 690">
    {[0, 1, 2, 3, 4].map(j => <L key={"r" + j} a={P(0, j)} b={P(4, j)} c={RED} />)}
    {[0, 1, 2, 3, 4].map(i => <L key={"c" + i} a={P(i, 0)} b={P(i, 4)} c={RED} />)}
    {[0, 1, 2, 3, 4].map(i => <L key={"g" + i} a={P(i, 0)} b={[colB[i][1] - 5.5, colB[i][2] - 11]} c={GREEN} />)}
    {rowB.map(([n, x, y], k) => <L key={n} a={[x + 10, y - 1.5]} b={P(0, 4 - k)} c={GREEN} />)}
    <L a={[638, 612]} b={[465, 319]} c={GREEN} />
    <L a={[699, 643]} b={[1010, 596]} c={GREEN} />
    {[0, 1, 2, 3, 4].map(j => {
      const x = 638 - 43.25 * j, y = 612 - 73.25 * j;
      return <L key={"t" + j} a={[x - 8, y - 4]} b={[x + 8, y + 4]} c={GREEN} />;
    })}
    {[0, 1, 2, 3, 4].map(i => {
      const x = 699 + 77.7 * i, y = 643 - 11.75 * i;
      return <L key={"u" + i} a={[x - 2, y + 6]} b={[x + 2, y - 6]} c={GREEN} />;
    })}
    {rowB.concat(colB).map(([n, x, y]) => (
      <g key={"b" + n}>
        <polygon points={bubble(x, y)} fill="#000" stroke={GREEN} strokeWidth="1" />
        <text x={x} y={y + 6} textAnchor="middle" style={labelStyle}>{n}</text>
      </g>
    ))}
    {dimH.map(([x, y], k) => (
      <text key={"h" + k} x={x} y={y} textAnchor="middle" dominantBaseline="middle"
        transform={`rotate(-2 ${x} ${y})`} style={labelStyle}>3000</text>
    ))}
    {dimV.map(([x, y], k) => (
      <text key={"v" + k} x={x} y={y} textAnchor="middle" dominantBaseline="middle"
        transform={`rotate(-90 ${x} ${y})`} style={labelStyle}>3000</text>
    ))}
    <polygon points="619,241 721,188 850,407 706,387" fill="#dd6ca6" />
    <polygon points="721,188 774,217 860,363 938,352 1023,497 928,396 850,407" fill="#ff8fd8" />
    <polygon points="629,399 706,387 850,407 772,419" fill="#ff8fd8" />
    <polygon points="629,399 772,419 850,407 928,396 1023,497 715,545" fill="#dd6ca6" />
  </CanvasSvg>
);

const Annotations = () => (
  <Overlay width="1185" height="779" viewBox="0 0 1185 779">
    <ellipse cx="76" cy="549" rx="31" ry="10" stroke="#e85a5a" fill="none" />
    <ellipse cx="867" cy="75" rx="43" ry="17" stroke="#e85a5a" fill="none" />
    <ellipse cx="863" cy="182" rx="32" ry="19" stroke="#e85a5a" fill="none" />
    <polygon points="106.500,546.500 107.500,548 817,98 814,94" fill="#f24343" />
    <polygon points="828,87 810,90 817,100" fill="#f24343" />
    <polygon points="841.500,95 843,95 843.500,154 840.500,154" fill="#f24343" />
    <polygon points="842,163 838,152 846,152" fill="#f24343" />
    <polygon points="846,205 846.500,205.500 815,277 811.500,275" fill="#e04040" />
    <polygon points="810,285 809,273 818,277" fill="#f24343" />
  </Overlay>
);

const menuItems = ["外墙轴线", "外墙内边线", "外墙内边线、栏板内边线", "栏板内边线", "现浇板"];

export default function App() {
  return (
    <Page>
      <Global />
      <TopBar $h={31} $top="#e9edf7" $bottom="#c8d0e6">{row1.map(render)}</TopBar>
      <Main>
        <NavCol>
          <Title $active>
            <TitleText>模块导航栏</TitleText>
            <PinBtn c="#fff" /><CloseBtn c="#fff" />
          </Title>
          <NavBtn $h={23} $mt={2}>工程设置</NavBtn>
          <NavBtn $h={22} $mt={0} $on>绘图输入</NavBtn>
          <TreeTools>
            <SquareBtn>
              <I w={11} h={11}><path d="M5.500 1v9M1 5.500h9" stroke="#3d78b8" strokeWidth="2" /></I>
            </SquareBtn>
            <SquareBtn>
              <I w={11} h={11}><path d="M1 5.500h9" stroke="#6d8cc0" strokeWidth="2" /></I>
            </SquareBtn>
          </TreeTools>
          <NavTree />
        </NavCol>
        <ListCol>
          <Title>
            <TitleText>构件列表</TitleText>
            <PinBtn c="#111" /><CloseBtn c="#333" />
          </Title>
          <PanelBar>
            <Tool $gap={1}>{icons.addNew}新建</Tool>
            <Drop $ml={3} />
            <Tool $ml={6}>{icons.del}</Tool>
            <Tool $ml={9}>{icons.copyDoc}</Tool>
            <Tool $ml={5} $gap={5}>{icons.filter}过滤</Tool>
            <Drop $ml={3} />
          </PanelBar>
          <Search>
            <SearchInput>搜索构件...</SearchInput>
            <SearchIcon>{icons.magnify}</SearchIcon>
          </Search>
          <ListBox>
            <Grid $w={263}>
              <tbody>
                <tr><PlainHead $w={25} /><HeadCell>构件名称</HeadCell></tr>
                <tr><NumCell>1</NumCell><WmCell $pl={21}>WM-1</WmCell></tr>
              </tbody>
            </Grid>
          </ListBox>
          <Title $mt={8}>
            <TitleText>属性编辑框</TitleText>
            <PinBtn c="#111" /><CloseBtn c="#333" />
          </Title>
          <AttrBox>
            <Grid $w={179}>
              <tbody>
                <tr>
                  <PlainHead $w={83} $left>属性名称</PlainHead>
                  <HeadCell $left $w={65}>属性值</HeadCell>
                  <PlainHead $w={31}>附加</PlainHead>
                </tr>
                <tr><AttrName $blue>名称</AttrName><WmCell $pl={2}>WM-1</WmCell><td /></tr>
                <tr>
                  <AttrName>顶标高<Mono>(m)</Mono></AttrName>
                  <AttrValue>顶板顶标</AttrValue>
                  <CheckCell><Check /></CheckCell>
                </tr>
                <tr><AttrName $blue>备注</AttrName><td /><CheckCell><Check /></CheckCell></tr>
                <tr><AttrGroup><AttrGroupIn><PlusBox>+</PlusBox>计算属性</AttrGroupIn></AttrGroup><td /><td /></tr>
                <tr><AttrGroup><AttrGroupIn><PlusBox>+</PlusBox>显示样式</AttrGroupIn></AttrGroup><td /><td /></tr>
              </tbody>
            </Grid>
          </AttrBox>
        </ListCol>
        <Work>
          <Row2 $h={28} $top="#f3f4f9" $bottom="#d9deee">{row2.map(render)}</Row2>
          <Bar $h={27} $top="#f3f4f9" $bottom="#d9deee">{row3.map(render)}</Bar>
          <Body>
            <VToolbar />
            <Drawing />
          </Body>
        </Work>
      </Main>
      <Menu>
        {menuItems.map(m => <MenuItem key={m}>{m}</MenuItem>)}
      </Menu>
      <Annotations />
    </Page>
  );
}
